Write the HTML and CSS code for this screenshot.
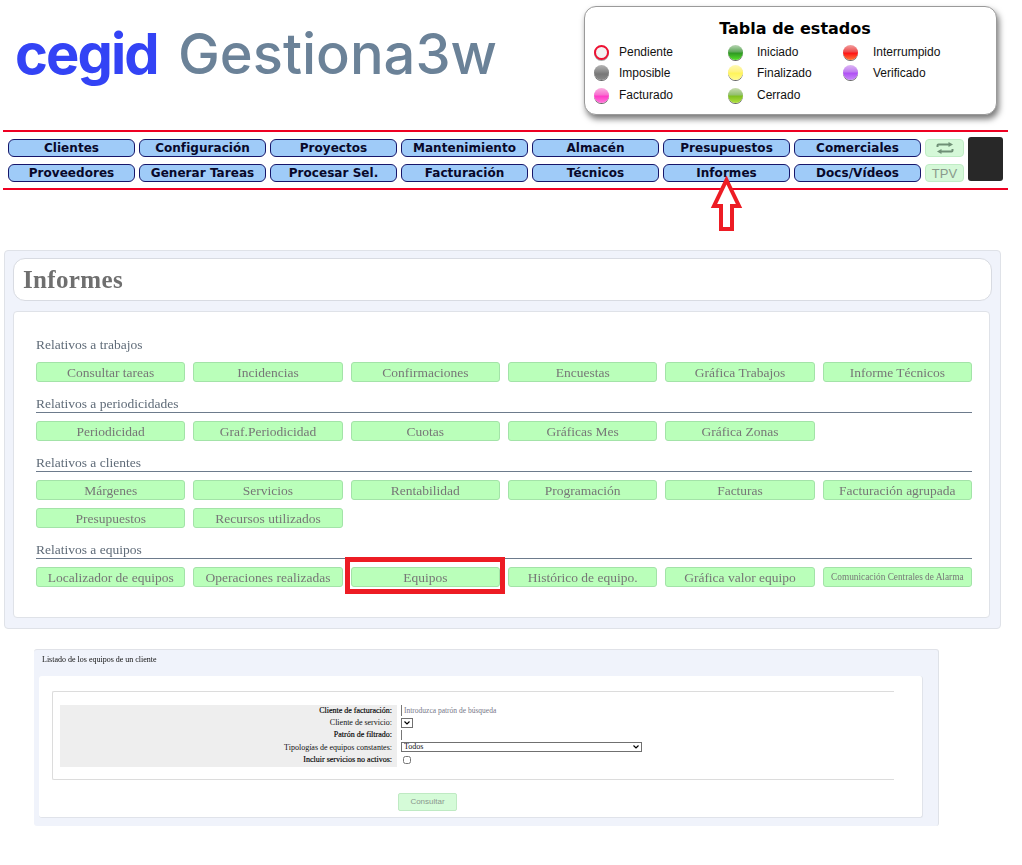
FILE: index.html
```html
<!DOCTYPE html>
<html lang="es">
<head>
<meta charset="utf-8">
<title>Informes</title>
<link rel="stylesheet" href="styles.css">
</head>
<body>
<header class="top">
  <div class="logo"><span class="logo-brand">cegid</span><span class="logo-name">Gestiona3w</span></div>
  <section class="legend">
    <h2 class="legend-title">Tabla de estados</h2>
    <div class="legend-grid">
      <i class="ball b-pend"></i><span>Pendiente</span>
      <i class="ball b-ini"></i><span>Iniciado</span>
      <i class="ball b-int"></i><span>Interrumpido</span>
      <i class="ball b-imp"></i><span>Imposible</span>
      <i class="ball b-fin"></i><span>Finalizado</span>
      <i class="ball b-ver"></i><span>Verificado</span>
      <i class="ball b-fac"></i><span>Facturado</span>
      <i class="ball b-cer"></i><span>Cerrado</span>
    </div>
  </section>
</header>

<nav class="nav">
  <div class="nav-grid">
    <a class="nav-btn">Clientes</a>
    <a class="nav-btn">Configuración</a>
    <a class="nav-btn">Proyectos</a>
    <a class="nav-btn">Mantenimiento</a>
    <a class="nav-btn">Almacén</a>
    <a class="nav-btn">Presupuestos</a>
    <a class="nav-btn">Comerciales</a>
    <a class="nav-mini">
      <svg class="swap" viewBox="0 0 18 12" width="18" height="12" aria-hidden="true">
        <path d="M1.5 5V3.5Q1.5 2.5 2.5 2.5H13" fill="none" stroke="#6f8f76" stroke-width="2"/>
        <path d="M12.5 0L17 2.5L12.5 5Z" fill="#6f8f76"/>
        <path d="M16.5 7V8.5Q16.5 9.5 15.5 9.5H5" fill="none" stroke="#6f8f76" stroke-width="2"/>
        <path d="M5.5 7L1 9.5L5.5 12Z" fill="#6f8f76"/>
      </svg>
    </a>
    <a class="nav-btn">Proveedores</a>
    <a class="nav-btn">Generar Tareas</a>
    <a class="nav-btn">Procesar Sel.</a>
    <a class="nav-btn">Facturación</a>
    <a class="nav-btn">Técnicos</a>
    <a class="nav-btn">Informes</a>
    <a class="nav-btn">Docs/Vídeos</a>
    <a class="nav-mini">TPV</a>
  </div>
  <div class="nav-dark"></div>
  <svg class="arrow" viewBox="0 0 36 56" width="36" height="56" aria-hidden="true">
    <path d="M17.5 4L30 30H23V53H12V30H5Z" fill="#fff" stroke="#ed1c24" stroke-width="4"/>
  </svg>
</nav>

<main>
  <section class="panel">
    <div class="title-card"><h1 class="title">Informes</h1></div>
    <div class="body-card">
      <h3 class="group plain"><span>Relativos a trabajos</span></h3>
      <div class="tiles">
        <a class="tile"><span>Consultar tareas</span></a>
        <a class="tile"><span>Incidencias</span></a>
        <a class="tile"><span>Confirmaciones</span></a>
        <a class="tile"><span>Encuestas</span></a>
        <a class="tile"><span>Gráfica Trabajos</span></a>
        <a class="tile"><span>Informe Técnicos</span></a>
      </div>
      <h3 class="group"><span>Relativos a periodicidades</span></h3>
      <div class="tiles">
        <a class="tile"><span>Periodicidad</span></a>
        <a class="tile"><span>Graf.Periodicidad</span></a>
        <a class="tile"><span>Cuotas</span></a>
        <a class="tile"><span>Gráficas Mes</span></a>
        <a class="tile"><span>Gráfica Zonas</span></a>
      </div>
      <h3 class="group"><span>Relativos a clientes</span></h3>
      <div class="tiles">
        <a class="tile"><span>Márgenes</span></a>
        <a class="tile"><span>Servicios</span></a>
        <a class="tile"><span>Rentabilidad</span></a>
        <a class="tile"><span>Programación</span></a>
        <a class="tile"><span>Facturas</span></a>
        <a class="tile"><span>Facturación agrupada</span></a>
        <a class="tile"><span>Presupuestos</span></a>
        <a class="tile"><span>Recursos utilizados</span></a>
      </div>
      <h3 class="group"><span>Relativos a equipos</span></h3>
      <div class="tiles">
        <a class="tile"><span>Localizador de equipos</span></a>
        <a class="tile"><span>Operaciones realizadas</span></a>
        <a class="tile"><span>Equipos</span><b class="mark"></b></a>
        <a class="tile"><span>Histórico de equipo.</span></a>
        <a class="tile"><span>Gráfica valor equipo</span></a>
        <a class="tile tile-small"><span>Comunicación Centrales de Alarma</span></a>
      </div>
    </div>
  </section>

  <section class="form-panel">
    <div class="form-title">Listado de los equipos de un cliente</div>
    <div class="form-card">
      <div class="fieldset">
        <div class="form-grid">
          <label class="lab strong">Cliente de facturación:</label>
          <div class="val"><span class="hint">Introduzca patrón de búsqueda</span></div>
          <label class="lab">Cliente de servicio:</label>
          <div class="val"><select class="sel sel-mini"><option></option></select></div>
          <label class="lab strong">Patrón de filtrado:</label>
          <div class="val"><span class="bare"></span></div>
          <label class="lab">Tipologías de equipos constantes:</label>
          <div class="val"><select class="sel sel-wide"><option>Todos</option></select></div>
          <label class="lab strong">Incluir servicios no activos:</label>
          <div class="val"><input class="chk" type="checkbox"></div>
        </div>
      </div>
      <div class="form-actions"><a class="submit">Consultar</a></div>
    </div>
  </section>
</main>
</body>
</html>
```

FILE: styles.css
```css
* { box-sizing: border-box; }
html, body { margin: 0; padding: 0; background: #fff; }
body { font-family: "Liberation Serif", serif; overflow: hidden; }

/* header */
.top { display: flex; justify-content: space-between; height: 130px; padding: 6px 25px 0 15px; }
.logo { display: flex; align-items: baseline; height: 86px; padding-top: 18px; font-family: Inter, "Liberation Sans", sans-serif; font-size: 56px; line-height: 60px; filter: blur(.4px); }
.logo-brand { color: #3343f5; font-weight: 700; letter-spacing: -1.9px; width: 163px; }
.logo-name { color: #6b8298; font-weight: 500; letter-spacing: 0; }

.legend { width: 413px; height: 109px; border: 1px solid #9a9a9a; border-radius: 12px; box-shadow: 2px 4px 6px #777; background: #fff; padding: 12px 0 0 9px; }
.legend-title { margin: 0; text-align: center; font: 700 16px/20px "DejaVu Sans", sans-serif; color: #000; }
.legend-grid { display: grid; grid-template-columns: 25px 109px 29px 86px 30px 1fr; grid-template-rows: 20px 21px 24px; align-items: center; margin-top: 3px; font: 12px "Liberation Sans", sans-serif; color: #111; }
.ball { display: block; width: 15px; height: 15px; margin-left: -.5px; border-radius: 50%; box-shadow: 0 1px 0 #666; }
.b-pend { background: #f3f3f3; border: 2px solid #ee1133; box-shadow: 0 1px 0 #aaa; }
.b-ini { background: linear-gradient(#b9d6b4, #5fa85a 45%, #2f9a22 55%, #55e02a); }
.b-int { background: linear-gradient(#f2a0a0, #ee4a4a 45%, #ff1414 55%, #ff7a3a); }
.b-imp { background: linear-gradient(#b5b5b5, #888 45%, #777 60%, #8a8a8a); }
.b-fin { background: linear-gradient(#fff9b5, #fff37d 45%, #fff45a 55%, #fffa8c); }
.b-ver { background: linear-gradient(#dcb7f5, #c07cf0 45%, #b050f5 55%, #c88af8); }
.b-fac { background: linear-gradient(#f9b0e0, #f870d0 45%, #ff3cc8 55%, #ff78d8); }
.b-cer { background: linear-gradient(#c8dcb0, #94c070 45%, #80c020 55%, #b0e040); }

/* nav */
.nav { position: relative; display: flex; align-items: flex-start; margin: 0 14px 0 3px; height: 60px; border-top: 2px solid #ee0022; border-bottom: 2px solid #ee0022; padding: 5px 0 0 5px; }
.nav-grid { display: grid; grid-template-columns: repeat(7, 127px) 39px; grid-auto-rows: 18px; gap: 7px 4px; margin-top: 2px; }
.nav-btn { display: flex; align-items: center; justify-content: center; background: #9fcbf8; border: 1px solid #16166a; border-radius: 6px; font: 700 12px/1 "DejaVu Sans", sans-serif; color: #08082a; letter-spacing: .05px; }
.nav-mini { display: flex; align-items: center; justify-content: center; background: #d5f8d8; border: 1px solid #c0ecc5; border-radius: 4px; font: 13px/1 "Liberation Sans", sans-serif; color: #8a9a8c; }
.nav-dark { width: 35px; height: 44px; margin-left: 4px; background: #282828; border-radius: 3px; }
.arrow { position: absolute; left: 706px; top: 44px; }

/* informes panel */
.panel { margin: 60px 21px 0 4px; height: 379px; padding: 7px 10px 0 8px; background: #f0f3fb; border: 1px solid #dfe2e8; border-radius: 4px; }
.title-card { height: 43px; margin-right: -2px; background: #fff; border: 1px solid #d8dbe2; border-radius: 12px; padding-left: 9px; display: flex; align-items: center; }
.title { margin: 0; font: 700 25px/1 "Liberation Serif", serif; color: #6f6f6f; letter-spacing: .35px; filter: blur(.3px); }
.body-card { margin-top: 10px; height: 307px; background: #fff; border: 1px solid #dfe2e8; border-radius: 4px; padding: 26px 17px 0 22px; }
.group { margin: 15px 0 8px; height: 16px; border-bottom: 1px solid #6d7b8c; font: 400 13.5px/13px "Liberation Serif", serif; color: #5f6b78; }
.group span { filter: blur(.4px); display: inline-block; }
.group.plain { margin-top: 0; border-bottom-color: transparent; }
.tiles { display: grid; grid-template-columns: repeat(6, 1fr); grid-auto-rows: 20px; gap: 8px; }
.tile { position: relative; display: flex; align-items: center; justify-content: center; padding-top: 2px; background: #baffba; border: 1px solid #a3e3a8; border-radius: 3px; font: 13.5px/1 "Liberation Serif", serif; color: #777; white-space: nowrap; }
.tile span { filter: blur(.4px); }
.tile-small { font-size: 9.3px; }
.mark { position: absolute; left: -7px; right: -6px; top: -11px; bottom: -8px; border: 5px solid #ed1c24; pointer-events: none; }

/* form panel */
.form-panel { margin: 20px 83px 0 34px; height: 177px; padding: 5px 15px 0 5px; background: #f0f3fb; border-top: 1px solid #e0e2e8; border-right: 1px solid #dfe2e8; border-radius: 3px; }
.form-title { height: 21px; padding-left: 3px; font: 8px/10px "Liberation Serif", serif; color: #111; filter: blur(.2px); }
.form-card { height: 142px; background: #fff; border: 1px solid #e0e3ea; border-top: 0; border-left: 0; border-radius: 3px; padding: 15px 28px 0 13px; }
.fieldset { height: 89px; border: 1px solid #dcdcdc; border-right: 0; border-radius: 2px 0 0 2px; padding: 13px 0 0 7px; }
.form-grid { display: grid; grid-template-columns: 337px 1fr; grid-auto-rows: 12.4px; font: 8px/12px "Liberation Serif", serif; }
.lab { display: flex; align-items: center; justify-content: flex-end; padding: 0 5px 1px 0; background: #eeeeee; color: #111; white-space: nowrap; }
.lab.strong { color: #000; -webkit-text-stroke: .15px #000; }
.val { display: flex; align-items: center; padding: 0 0 2px 4px; }
.hint { padding-left: 2px; border-left: 1px solid #777; color: #778; font-size: 7.5px; line-height: 11px; white-space: nowrap; }
.bare { display: block; width: 1px; height: 10px; background: #777; }
.sel { appearance: none; -webkit-appearance: none; height: 10px; padding: 0 0 0 2px; font: 8px/8px "Liberation Serif", serif; color: #111; border: 1px solid #707070; border-radius: 0; background: #fff url("data:image/svg+xml,%3Csvg xmlns='http://www.w3.org/2000/svg' width='6' height='4'%3E%3Cpath d='M.5.5L3 3L5.5.5' fill='none' stroke='%23000' stroke-width='1.2'/%3E%3C/svg%3E") no-repeat right 2px center; }
.sel-mini { width: 12px; }
.sel-wide { width: 241px; }
.chk { width: 8px; height: 8px; margin: 0 0 0 2px; }
.form-actions { margin-top: 13px; padding-left: 346px; }
.submit { display: flex; align-items: center; justify-content: center; width: 59px; height: 18px; background: #d5fbd8; border: 1px solid #bfeac3; border-radius: 2px; font: 8px/1 "Liberation Sans", sans-serif; color: #8b978d; }
```
